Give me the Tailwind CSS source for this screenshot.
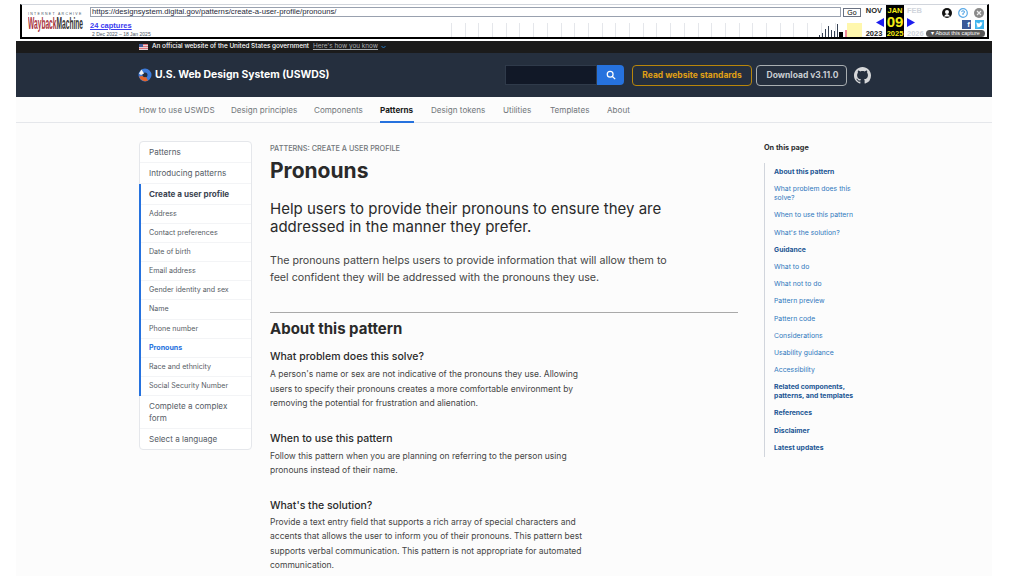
<!DOCTYPE html>
<html lang="en">
<head>
  <meta charset="UTF-8" />
  <title>Pronouns | U.S. Web Design System (USWDS)</title>
  <script src="https://cdn.jsdelivr.net/npm/@tailwindcss/browser@4"></script>
</head>
<body class="bg-white h-[576px] overflow-hidden font-['Inter',sans-serif]">

  <!-- wayback toolbar -->
  <div class="ml-[20px] mt-[4px] w-[969px] h-[35px] bg-white border-l-2 border-r-2 border-b-2 border-black border-t border-t-gray-300 flex font-['Liberation_Sans',sans-serif] text-black">
    <div class="w-[68px] shrink-0 pl-[6px] pt-[7px]">
      <div class="text-[3.5px] leading-[5px] tracking-[1.3px] text-gray-600 whitespace-nowrap">INTERNET ARCHIVE</div>
      <div class="h-[14px] text-[17px] leading-[14px] font-bold whitespace-nowrap origin-left scale-x-[0.39]"><span class="text-[#a8323c]">Wayback</span><span class="text-[#333]">Machine</span></div>
    </div>
    <div class="w-[773px] shrink-0">
      <div class="flex gap-[2px] items-start pt-[2px]">
        <div class="w-[751px] h-[10px] border border-gray-400 text-[7.700px] leading-[8px] px-[1px] text-gray-800">https://designsystem.digital.gov/patterns/create-a-user-profile/pronouns/</div>
        <div class="w-[18px] h-[9px] mt-[1px] border border-gray-500 text-[7px] leading-[7px] text-center">Go</div>
      </div>
      <div class="flex mt-[4px]">
        <div class="w-[361px] shrink-0">
          <div class="text-[7.500px] leading-[10px] font-bold text-[#3b3bf0] underline">24 captures</div>
          <div class="text-[5px] leading-[7px] text-gray-600 pl-[2px]">2 Dec 2022 – 18 Jan 2025</div>
        </div>
        <div class="w-[411px] h-[14px] mt-[2px] flex items-end bg-[repeating-linear-gradient(to_right,#e5e7eb_0,#e5e7eb_1px,transparent_1px,transparent_13.7px)]">
          <div class="w-[368px] shrink-0"></div>
          <div class="w-[28px] h-[13px] flex items-end gap-[2px] shrink-0">
            <div class="w-px h-[2px] bg-gray-700"></div>
            <div class="w-px h-[4px] bg-gray-700"></div>
            <div class="w-px h-[8px] bg-gray-700"></div>
            <div class="w-px h-[11px] bg-gray-700"></div>
            <div class="w-px h-[7px] bg-gray-700"></div>
            <div class="w-px h-[6px] bg-gray-700"></div>
            <div class="w-px h-[13px] bg-gray-700"></div>
            <div class="w-[4px] h-[5px] bg-black"></div>
            <div class="w-[2px] h-[7px] bg-[#f08a9a]"></div>
          </div>
          <div class="w-[15px] h-[14px] bg-[#fff7ad] shrink-0"></div>
        </div>
      </div>
    </div>
    <div class="w-[22px] shrink-0 text-center font-bold text-[#222] pt-px">
      <div class="text-[7.500px] leading-[9px]">NOV</div>
      <div class="h-[14px] flex justify-end items-center pr-[1px]">
        <svg width="8" height="9" viewBox="0 0 8 9"><path d="M8 0V9L0 4.500Z" fill="#1d1dee"/></svg>
      </div>
      <div class="text-[7.500px] leading-[9px]">2023</div>
    </div>
    <div class="w-[18px] shrink-0 ml-[1px] bg-black text-center font-bold text-[#f5ee16] pt-px">
      <div class="text-[7.500px] leading-[9px]">JAN</div>
      <div class="text-[15px] leading-[14px]">09</div>
      <div class="text-[7.500px] leading-[9px]">2025</div>
    </div>
    <div class="w-[22px] shrink-0 pl-[3px] font-bold text-gray-300 pt-px">
      <div class="text-[7.500px] leading-[9px]">FEB</div>
      <div class="h-[14px] flex items-center">
        <svg width="8" height="9" viewBox="0 0 8 9"><path d="M0 0V9L8 4.500Z" fill="#1d1dee"/></svg>
      </div>
      <div class="text-[7.500px] leading-[9px]">2026</div>
    </div>
    <div class="w-[59px] shrink-0 flex flex-col items-end">
      <div class="flex items-center gap-[6px] mt-[3px] pr-[1px]">
        <svg width="10" height="10" viewBox="0 0 10 10"><circle cx="5" cy="5" r="5" fill="#111"/><circle cx="5" cy="4" r="2" fill="#fff"/><path d="M1.800 8.500 Q5 3.500 8.200 8.500Z" fill="#fff"/></svg>
        <svg width="10" height="10" viewBox="0 0 10 10"><circle cx="5" cy="5" r="4.300" fill="none" stroke="#5aa9e6" stroke-width="1.200"/><path d="M3.500 3.800Q5 1.800 6.500 3.800Q6.500 5 5 5.500V7" fill="none" stroke="#5aa9e6" stroke-width="1.100"/></svg>
        <svg width="10" height="10" viewBox="0 0 10 10"><circle cx="5" cy="5" r="5" fill="#8a8a8a"/><path d="M3 3L7 7M7 3L3 7" stroke="#eee" stroke-width="1.200"/></svg>
      </div>
      <div class="flex gap-[4px] mt-[2px] pr-[1px]">
        <div class="w-[9px] h-[9px] bg-[#3b5998] text-white text-[8px] leading-[10px] font-bold text-right pr-[1px]">f</div>
        <div class="w-[9px] h-[9px] bg-[#3fb4ee] flex items-center justify-center">
          <svg width="7" height="6" viewBox="0 0 7 6"><path d="M0 5Q3 6 5 4Q6 3 6 1.500L7 .5 6 .8 5 0Q3.500 0 3.500 1.500Q2 1.500 .5 .3Q0 2 1.200 2.800L.5 2.600Q.5 3.800 1.800 4.200Q1 5 0 5Z" fill="#fff"/></svg>
        </div>
      </div>
      <div class="w-[59px] h-[7px] mt-[1px] bg-[#555] rounded-sm text-white text-[5.500px] leading-[7px] text-center whitespace-nowrap">▾ About this capture</div>
    </div>
  </div>

  <div class="mx-[16px] w-[976px] h-[537px] bg-[#fcfcfc] mt-[2px]">

    <!-- gov banner -->
    <div class="h-[12px] bg-[#1b1b1b] pl-[123px] flex items-center text-[6.400px] text-white font-medium whitespace-nowrap">
      <svg class="mr-[4px]" width="9" height="6" viewBox="0 0 9 6"><rect width="9" height="6" fill="#d9737b"/><path d="M0 1.500H9M0 3.500H9M0 5.500H9" stroke="#eee" stroke-width=".8"/><rect width="4" height="3" fill="#3f5d9e"/></svg>
      <span>An official website of the United States government</span>
      <span class="ml-[4px] text-[#a9aeb1] underline font-normal">Here's how you know</span>
      <svg class="ml-[3px]" width="5" height="4" viewBox="0 0 5 4"><path d="M.5 1L2.500 3L4.500 1" fill="none" stroke="#2378c3"/></svg>
    </div>

    <!-- header -->
    <div class="h-[44px] bg-[#252f3e] pl-[122px] flex items-center text-white">
      <svg width="14" height="14" viewBox="0 0 14 14" class="mr-[3px]">
        <circle cx="7" cy="7" r="4.500" fill="none" stroke="#3d7bd9" stroke-width="4"/>
        <path d="M1 8.500A6.500 6.500 0 0 0 10 12.500L8 9A2.500 2.500 0 0 1 4.700 8Z" fill="#e2662c"/>
        <path d="M3.500 1.500L6 5.500L3 7L1 5.500Z" fill="#f1f1f1"/>
      </svg>
      <div class="w-[350px] text-[10.400px] font-bold leading-none whitespace-nowrap">U.S. Web Design System (USWDS)</div>
      <div class="w-[92px] h-[20px] bg-[#111827] border border-[#2f3a4a]"></div>
      <div class="w-[27px] h-[20px] bg-[#2672de] rounded-r-sm flex items-center justify-center">
        <svg width="10" height="10" viewBox="0 0 24 24" fill="none" stroke="#fff" stroke-width="3"><circle cx="10" cy="10" r="7"/><path d="M15.500 15.500L22 22"/></svg>
      </div>
      <div class="ml-[8px] w-[120px] h-[21px] border border-[#b8860b] rounded-sm flex items-center justify-center text-[8.500px] font-bold text-[#e0a015] whitespace-nowrap">Read website standards</div>
      <div class="ml-[4px] w-[91px] h-[21px] border border-[#a9aeb1] rounded-sm flex items-center justify-center pl-[2px] text-[8.500px] font-bold text-[#c9cdd2] whitespace-nowrap">Download v3.11.0</div>
      <svg class="ml-[7px]" width="17" height="17" viewBox="0 0 16 16" fill="#d6d7d9"><path d="M8 0C3.580 0 0 3.580 0 8c0 3.540 2.290 6.530 5.470 7.590.4.070.55-.17.55-.38 0-.19-.01-.82-.01-1.490-2.010.37-2.530-.49-2.690-.94-.09-.23-.48-.94-.82-1.130-.28-.15-.68-.52-.01-.53.630-.01 1.080.58 1.230.82.720 1.210 1.870.870 2.330.660.070-.52.280-.87.510-1.070-1.780-.2-3.640-.89-3.640-3.950 0-.87.310-1.590.820-2.150-.08-.2-.36-1.020.08-2.120 0 0 .67-.21 2.200.820.640-.18 1.320-.27 2-.27s1.360.09 2 .27c1.530-1.040 2.200-.82 2.200-.82.440 1.100.160 1.920.080 2.120.510.560.820 1.270.820 2.150 0 3.070-1.870 3.750-3.650 3.950.290.250.540.730.540 1.480 0 1.070-.01 1.930-.01 2.200 0 .210.150.460.550.380A8.010 8.010 0 0 0 16 8c0-4.420-3.580-8-8-8z"/></svg>
    </div>

    <!-- nav -->
    <div class="h-[26px] border-b border-gray-200 pl-[123px] flex text-[8.100px] leading-[26px] text-[#71767a] whitespace-nowrap">
      <div class="w-[92px]">How to use USWDS</div>
      <div class="w-[83px]">Design principles</div>
      <div class="w-[66px]">Components</div>
      <div class="w-[51px] font-bold text-[#1b1b1b]"><div class="w-[34px] h-[26px] border-b-2 border-[#2672de]">Patterns</div></div>
      <div class="w-[72px]">Design tokens</div>
      <div class="w-[47px]">Utilities</div>
      <div class="w-[57px]">Templates</div>
      <div>About</div>
    </div>

    <div class="flex pl-[123px] pt-[18px]">

      <!-- side nav -->
      <div class="w-[113px] h-[309px] shrink-0 border border-gray-200 rounded-sm bg-white text-[#565c65] text-[8.100px]">
        <div class="h-[21px] leading-[20px] pl-[9px] border-b border-gray-100">Patterns</div>
        <div class="h-[21px] leading-[20px] pl-[9px] border-b border-gray-100">Introducing patterns</div>
        <div class="border-l-2 border-[#2672de] -ml-px text-[7.100px]">
          <div class="h-[21px] leading-[20px] pl-[8px] border-b border-gray-100 text-[8.100px] font-bold text-[#3d4551]">Create a user profile</div>
          <div class="h-[19.100px] leading-[18px] pl-[8px] border-b border-gray-100">Address</div>
          <div class="h-[19.100px] leading-[18px] pl-[8px] border-b border-gray-100">Contact preferences</div>
          <div class="h-[19.100px] leading-[18px] pl-[8px] border-b border-gray-100">Date of birth</div>
          <div class="h-[19.100px] leading-[18px] pl-[8px] border-b border-gray-100">Email address</div>
          <div class="h-[19.100px] leading-[18px] pl-[8px] border-b border-gray-100">Gender identity and sex</div>
          <div class="h-[19.100px] leading-[18px] pl-[8px] border-b border-gray-100">Name</div>
          <div class="h-[19.100px] leading-[18px] pl-[8px] border-b border-gray-100">Phone number</div>
          <div class="h-[19.100px] leading-[18px] pl-[8px] border-b border-gray-100 font-bold text-[#2672de]">Pronouns</div>
          <div class="h-[19.100px] leading-[18px] pl-[8px] border-b border-gray-100">Race and ethnicity</div>
          <div class="h-[19.100px] leading-[18px] pl-[8px] border-b border-gray-100">Social Security Number</div>
        </div>
        <div class="pl-[9px] pt-[4px] pb-[4px] leading-[12px] border-b border-gray-100">Complete a complex<br>form</div>
        <div class="h-[21px] leading-[20px] pl-[9px]">Select a language</div>
      </div>

      <!-- main column -->
      <div class="w-[468px] ml-[18px] pt-px shrink-0 text-[#2a2a2a]">
        <div class="text-[7.300px] leading-[14px] text-[#71767a] font-medium">PATTERNS: CREATE A USER PROFILE</div>
        <h1 class="text-[21px] leading-[30px] font-bold">Pronouns</h1>
        <p class="text-[15px] leading-[18px] mt-[14px] w-[410px]">Help users to provide their pronouns to ensure they are addressed in the manner they prefer.</p>
        <p class="text-[10.700px] leading-[17px] mt-[16px] w-[410px] text-[#454545]">The pronouns pattern helps users to provide information that will allow them to feel confident they will be addressed with the pronouns they use.</p>
        <div class="h-px bg-[#a9a9a9] mt-[26px]"></div>
        <h2 class="text-[15px] leading-[20px] font-bold mt-[6px]">About this pattern</h2>
        <h3 class="text-[10.500px] leading-[14px] font-medium mt-[11px]">What problem does this solve?</h3>
        <p class="text-[8.500px] leading-[14.500px] mt-[3px] w-[320px] text-[#454545]">A person's name or sex are not indicative of the pronouns they use. Allowing users to specify their pronouns creates a more comfortable environment by removing the potential for frustration and alienation.</p>
        <h3 class="text-[10.500px] leading-[14px] font-medium mt-[21px]">When to use this pattern</h3>
        <p class="text-[8.500px] leading-[14.500px] mt-[3px] w-[320px] text-[#454545]">Follow this pattern when you are planning on referring to the person using pronouns instead of their name.</p>
        <h3 class="text-[10.500px] leading-[14px] font-medium mt-[21px]">What's the solution?</h3>
        <p class="text-[8.500px] leading-[14.500px] mt-[2px] w-[320px] text-[#454545]">Provide a text entry field that supports a rich array of special characters and accents that allows the user to inform you of their pronouns. This pattern best supports verbal communication. This pattern is not appropriate for automated communication.</p>
      </div>

      <!-- on this page -->
      <div class="ml-[26px] w-[95px] shrink-0 text-[6.850px] leading-[8.700px] text-[#2f78bd]">
        <div class="font-bold text-[7.300px] text-[#2d2e2f] leading-[14px]">On this page</div>
        <div class="border-l border-gray-300 mt-[8px] pl-[9px] pt-[1px] [&>div]:pt-[4.250px] [&>div]:pb-[4.250px]">
          <div class="font-bold text-[#205493]">About this pattern</div>
          <div>What problem does this solve?</div>
          <div>When to use this pattern</div>
          <div>What's the solution?</div>
          <div class="font-bold text-[#205493]">Guidance</div>
          <div>What to do</div>
          <div>What not to do</div>
          <div>Pattern preview</div>
          <div>Pattern code</div>
          <div>Considerations</div>
          <div>Usability guidance</div>
          <div>Accessibility</div>
          <div class="font-bold text-[#205493]">Related components, patterns, and templates</div>
          <div class="font-bold text-[#205493]">References</div>
          <div class="font-bold text-[#205493]">Disclaimer</div>
          <div class="font-bold text-[#205493]">Latest updates</div>
        </div>
      </div>
    </div>
  </div>
</body>
</html>
